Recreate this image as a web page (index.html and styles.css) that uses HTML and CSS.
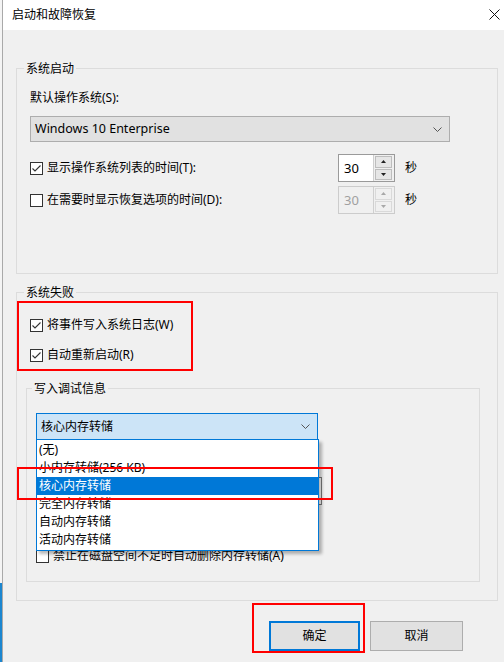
FILE: index.html
```html
<!DOCTYPE html>
<html lang="zh-CN">
<head>
<meta charset="utf-8">
<title>启动和故障恢复</title>
<link rel="stylesheet" href="styles.css">
</head>
<body>
<div class="window">
  <div class="titlebar">
    <span class="title">启动和故障恢复</span>
    <svg class="close" width="11" height="11" viewBox="0 0 11 11"><path d="M0.5 0.5L10.5 10.5M10.5 0.5L0.5 10.5" stroke="#111" stroke-width="1" fill="none"/></svg>
  </div>
  <div class="content">
    <section class="group g-start">
      <div class="legend">系统启动</div>
      <div class="field-label os-label">默认操作系统(S):</div>
      <div class="combo combo-os">
        <span class="combo-text">Windows 10 Enterprise</span>
        <svg class="chev" width="9" height="5" viewBox="0 0 9 5"><path d="M0.5 0.5L4.5 4.5L8.5 0.5" stroke="#555" stroke-width="1" fill="none"/></svg>
      </div>
      <div class="row row-first">
        <div class="check check-wide"><span class="box"><svg width="11" height="11" viewBox="0 0 11 11"><path d="M1.5 5.5L4 8L9.5 2.5" stroke="#333" stroke-width="1.1" fill="none"/></svg></span><span>显示操作系统列表的时间(T):</span></div>
        <div class="spin">
          <span class="spin-val">30</span>
          <span class="spin-btns">
            <span class="spin-btn"><svg width="5" height="3" viewBox="0 0 5 3"><path d="M0 3L2.5 0L5 3Z" fill="#222"/></svg></span>
            <span class="spin-btn"><svg width="5" height="3" viewBox="0 0 5 3"><path d="M0 0L2.5 3L5 0Z" fill="#222"/></svg></span>
          </span>
        </div>
        <span class="unit">秒</span>
      </div>
      <div class="row row-second">
        <div class="check check-wide"><span class="box"></span><span>在需要时显示恢复选项的时间(D):</span></div>
        <div class="spin spin-disabled">
          <span class="spin-val">30</span>
          <span class="spin-btns">
            <span class="spin-btn"><svg width="5" height="3" viewBox="0 0 5 3"><path d="M0 3L2.5 0L5 3Z" fill="#a8a8a8"/></svg></span>
            <span class="spin-btn"><svg width="5" height="3" viewBox="0 0 5 3"><path d="M0 0L2.5 3L5 0Z" fill="#a8a8a8"/></svg></span>
          </span>
        </div>
        <span class="unit">秒</span>
      </div>
    </section>

    <section class="group g-fail">
      <div class="legend">系统失败</div>
      <div class="check check-w"><span class="box"><svg width="11" height="11" viewBox="0 0 11 11"><path d="M1.5 5.5L4 8L9.5 2.5" stroke="#333" stroke-width="1.1" fill="none"/></svg></span><span>将事件写入系统日志(W)</span></div>
      <div class="check check-r"><span class="box"><svg width="11" height="11" viewBox="0 0 11 11"><path d="M1.5 5.5L4 8L9.5 2.5" stroke="#333" stroke-width="1.1" fill="none"/></svg></span><span>自动重新启动(R)</span></div>

      <section class="group g-debug">
        <div class="legend legend-debug">写入调试信息</div>
        <div class="combo-wrap">
          <div class="combo combo-dump">
            <span class="combo-text">核心内存转储</span>
            <svg class="chev" width="9" height="5" viewBox="0 0 9 5"><path d="M0.5 0.5L4.5 4.5L8.5 0.5" stroke="#555" stroke-width="1" fill="none"/></svg>
          </div>
          <ul class="dropdown">
            <li>(无)</li>
            <li>小内存转储(256 KB)</li>
            <li class="selected">核心内存转储</li>
            <li>完全内存转储</li>
            <li>自动内存转储</li>
            <li>活动内存转储</li>
          </ul>
        </div>
        <div class="dump-spacer"></div>
        <div class="textbox"></div>
        <div class="check check-a"><span class="box"></span><span>禁止在磁盘空间不足时自动删除内存转储(A)</span></div>
      </section>
    </section>

    <div class="buttons">
      <button class="btn btn-default">确定</button>
      <button class="btn">取消</button>
    </div>
  </div>

  <div class="mark mark-1"></div>
  <div class="mark mark-2"></div>
  <div class="mark mark-3"></div>
</div>
</body>
</html>
```

FILE: styles.css
```css
* { box-sizing: border-box; }

html, body {
  margin: 0;
  padding: 0;
}

body {
  width: 504px;
  height: 662px;
  overflow: hidden;
  background: linear-gradient(#f4f4f4 0, #f4f4f4 583px, #1c86cf 583px);
  font-family: "Noto Sans", "Noto Sans CJK SC", sans-serif;
  font-size: 12px;
  color: #000;
}

.window {
  position: relative;
  margin-left: 2px;
  width: 502px;
  height: 662px;
  border-left: 1px solid #a9a9a9;
  background: #f0f0f0;
}

.titlebar {
  height: 30px;
  background: #fff;
  display: flex;
  align-items: center;
  padding-left: 9px;
  padding-right: 4px;
}

.title {
  line-height: 16px;
}

.close {
  margin-left: auto;
  margin-top: -1px;
  display: block;
}

.content {
  padding-left: 13px;
}

.group {
  border: 1px solid #dcdcdc;
  padding-left: 13px;
}

.legend {
  width: fit-content;
  height: 15px;
  line-height: 15px;
  margin: -8px 0 0 -6px;
  padding: 0 2px;
  background: #f0f0f0;
}

.g-start {
  margin-top: 38px;
  width: 482px;
  height: 206px;
}

.field-label {
  line-height: 16px;
  height: 16px;
}

.os-label {
  margin-top: 14px;
}

.combo {
  display: flex;
  align-items: center;
  border: 1px solid #adadad;
  background: #e1e1e1;
  padding: 0 7px 0 4px;
}

.combo-text {
  line-height: 16px;
}

.combo-os .combo-text {
  font-size: 12.5px;
}

.chev {
  margin-left: auto;
  display: block;
}

.combo-os {
  margin-top: 10px;
  width: 420px;
  height: 26px;
}

.row {
  display: flex;
  align-items: center;
  height: 28px;
}

.row-first { margin-top: 12px; }
.row-second { margin-top: 4px; }

.check {
  display: flex;
  align-items: center;
  height: 16px;
  line-height: 16px;
}

.check-wide {
  width: 308px;
}

.box {
  width: 13px;
  height: 13px;
  border: 1px solid #333;
  background: #fff;
  margin-right: 4px;
  flex: none;
  display: flex;
  align-items: center;
  justify-content: center;
}

.box svg { display: block; }

.spin {
  width: 57px;
  height: 28px;
  border: 1px solid #9a9a9a;
  display: flex;
  background: #f0f0f0;
}

.spin-val {
  flex: 1;
  background: #fff;
  line-height: 26px;
  padding-left: 5px;
  font-size: 13px;
}

.spin-btns {
  width: 21px;
  display: flex;
  flex-direction: column;
  justify-content: center;
  gap: 1px;
  padding: 1px 2px 1px 1px;
  border-left: 1px solid #cfcfcf;
}

.spin-btn {
  flex: 1;
  background: #e6e6e6;
  border: 1px solid #bdbdbd;
  display: flex;
  align-items: center;
  justify-content: center;
}

.spin-btn svg { display: block; }

.spin-disabled {
  border-color: #cccccc;
}

.spin-disabled .spin-val {
  background: #f0f0f0;
  color: #a0a0a0;
}

.spin-disabled .spin-btn {
  background: #f0f0f0;
  border-color: #d9d9d9;
}

.unit {
  margin-left: 10px;
  line-height: 16px;
}

.g-fail {
  margin-top: 18px;
  width: 482px;
  height: 309px;
}

.check-w { margin-top: 17px; }
.check-r { margin-top: 14px; }

.g-debug {
  margin-top: 25px;
  margin-left: -4px;
  width: 454px;
  height: 194px;
  padding-left: 9px;
}

.legend-debug {
  margin-left: -4px;
}

.combo-wrap {
  position: relative;
  margin-top: 17px;
  width: 282px;
}

.combo-dump {
  height: 27px;
  border-color: #0078d7;
  background: #cce4f7;
}

.dropdown {
  position: absolute;
  left: 0;
  top: 26px;
  width: 283px;
  height: 112px;
  margin: 0;
  padding: 1px 0 0 0;
  list-style: none;
  background: #fff;
  border: 1px solid #0078d7;
  box-shadow: 3px 3px 3px rgba(0, 0, 0, 0.28);
  z-index: 2;
}

.dropdown li {
  height: 18px;
  line-height: 18px;
  padding-left: 2px;
}

.dropdown li.selected {
  background: #0078d7;
  color: #fff;
}

.dump-spacer {
  height: 37px;
}

.textbox {
  width: 286px;
  height: 28px;
  border: 1px solid #7a7a7a;
  background: #fff;
}

.check-a { margin-top: 43px; }

.buttons {
  display: flex;
  gap: 10px;
  margin-top: 20px;
  margin-left: 253px;
}

.btn {
  height: 30px;
  width: 93px;
  border: 1px solid #adadad;
  background: #e1e1e1;
  font-family: "Noto Sans", "Noto Sans CJK SC", sans-serif;
  font-size: 12px;
  color: #000;
  padding: 0;
  line-height: 16px;
}

.btn-default {
  width: 91px;
  border: 2px solid #0078d7;
}

.mark {
  position: absolute;
  border: 2px solid #ff0000;
  z-index: 5;
  pointer-events: none;
}

.mark-1 { left: 14px; top: 301px; width: 176px; height: 70px; }
.mark-2 { left: 14px; top: 467px; width: 316px; height: 33px; }
.mark-3 { left: 249px; top: 603px; width: 113px; height: 50px; }
```
